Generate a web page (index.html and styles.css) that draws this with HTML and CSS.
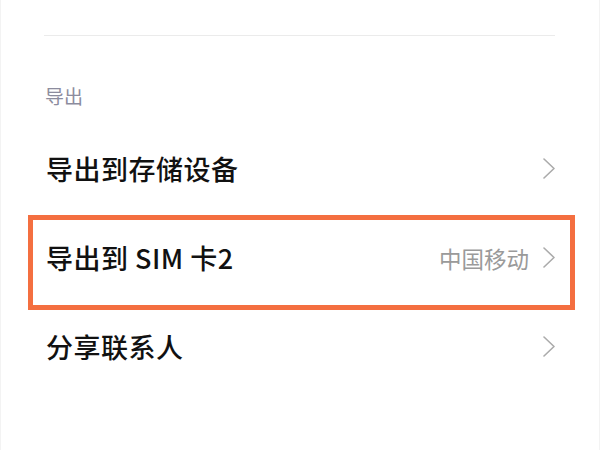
FILE: index.html
```html
<!DOCTYPE html>
<html lang="zh-CN">
<head>
<meta charset="utf-8">
<title>导出</title>
<link rel="stylesheet" href="styles.css">
</head>
<body>
<div class="page">
  <div class="divider"></div>
  <div class="section-title">导出</div>
  <div class="list">
    <div class="row">
      <span class="label">导出到存储设备</span>
      <span class="right">
        <svg class="chev" viewBox="0 0 12 21" width="12" height="21"><polyline points="1,1 11,10.5 1,20"/></svg>
      </span>
    </div>
    <div class="row highlight">
      <span class="label">导出到 SIM 卡2</span>
      <span class="right">
        <span class="value">中国移动</span>
        <svg class="chev" viewBox="0 0 12 21" width="12" height="21"><polyline points="1,1 11,10.5 1,20"/></svg>
      </span>
    </div>
    <div class="row">
      <span class="label">分享联系人</span>
      <span class="right">
        <svg class="chev" viewBox="0 0 12 21" width="12" height="21"><polyline points="1,1 11,10.5 1,20"/></svg>
      </span>
    </div>
  </div>
</div>
</body>
</html>
```

FILE: styles.css
```css
html, body {
  margin: 0;
  padding: 0;
  background: #ffffff;
}

body {
  font-family: "Noto Sans CJK SC", "Noto Sans", sans-serif;
  color: #111111;
}

.page {
  width: 600px;
  height: 450px;
  box-sizing: border-box;
  border-left: 1px solid #f3f3f3;
  border-right: 1px solid #f3f3f3;
  padding-top: 35px;
  overflow: hidden;
}

.divider {
  height: 1px;
  background: #ebebeb;
  margin: 0 44px 0 43px;
}

.section-title {
  margin-top: 48px;
  padding-left: 44px;
  height: 24px;
  line-height: 24px;
  font-size: 19px;
  color: #8c8c9e;
}

.list {
  margin-top: 16px;
}

.row {
  position: relative;
  height: 89px;
  display: flex;
  align-items: center;
  justify-content: space-between;
  padding: 0 44px 0 45px;
}

.label {
  font-size: 27px;
  font-weight: 500;
  color: #111111;
  letter-spacing: 0.5px;
}

.right {
  display: flex;
  align-items: center;
  gap: 14px;
}

.value {
  font-size: 22.5px;
  color: #9a9a9a;
}

.chev {
  display: block;
}

.chev polyline {
  fill: none;
  stroke: #ababab;
  stroke-width: 1.6;
  stroke-linecap: round;
  stroke-linejoin: round;
}

.highlight::after {
  content: "";
  position: absolute;
  left: 27px;
  right: 24px;
  top: 2px;
  bottom: -8px;
  border: 5px solid #f46f40;
  pointer-events: none;
}
```
